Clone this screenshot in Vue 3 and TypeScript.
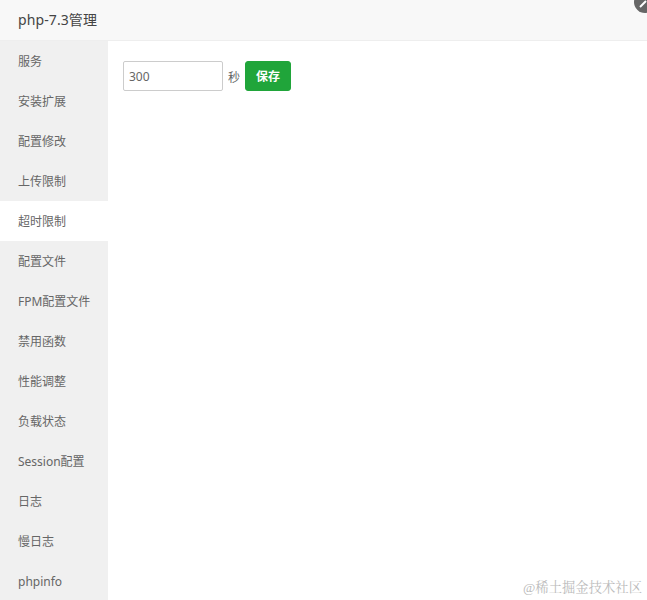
<script setup lang="ts">
const items: string[] = ['服务','安装扩展','配置修改','上传限制','超时限制','配置文件','FPM配置文件','禁用函数','性能调整','负载状态','Session配置','日志','慢日志','phpinfo']
const activeIndex = 4
</script>

<template>
  <div class="layer">
    <header class="title">php-7.3管理</header>
    <button class="close" aria-label="close">
      <svg width="16" height="16" viewBox="0 0 16 16"><path d="M3 13L9 7" stroke="#fff" stroke-width="2" fill="none"/></svg>
    </button>
    <div class="body">
      <nav class="side">
        <div v-for="(it, i) in items" :key="it" class="item" :class="{ on: i === activeIndex }">{{ it }}</div>
      </nav>
      <main class="main">
        <div class="form">
          <input class="field" value="300" />
          <span class="unit">秒</span>
          <button class="save">保存</button>
        </div>
      </main>
    </div>
    <div class="mark">@稀土掘金技术社区</div>
  </div>
</template>

<style>
html, body { margin: 0; background: #fff; overflow: hidden; }
</style>

<style scoped>
.layer {
  position: relative;
  width: 647px;
  height: 600px;
  overflow: hidden;
  background: #fff;
  font-family: "Noto Sans", "Noto Sans CJK SC", sans-serif;
  color: #555;
}
.title {
  box-sizing: border-box;
  height: 41px;
  padding-left: 18px;
  line-height: 40px;
  font-size: 14px;
  letter-spacing: 0.1px;
  color: #444;
  background: #f8f8f8;
  border-bottom: 1px solid #eee;
}
.close {
  position: absolute;
  top: -9px;
  right: -9px;
  width: 22px;
  height: 22px;
  padding: 0;
  border: 0;
  border-radius: 50%;
  background: #666;
  display: flex;
  align-items: center;
  justify-content: center;
}
.body { display: flex; height: 559px; }
.side { width: 108px; flex: none; background: #f0f0f0; }
.item {
  height: 40px;
  line-height: 42px;
  padding-left: 18px;
  font-size: 12px;
  color: #666;
  white-space: nowrap;
}
.item.on { background: #fff; }
.main { flex: 1; padding: 20px 15px; }
.form { display: flex; align-items: center; }
.field {
  box-sizing: border-box;
  width: 100px;
  height: 30px;
  padding: 0 5px;
  border: 1px solid #ccc;
  border-radius: 2px;
  font: inherit;
  font-size: 12px;
  color: #666;
  outline: none;
}
.unit { margin-left: 5px; padding-top: 2px; font-size: 12px; color: #666; }
.save {
  box-sizing: border-box;
  width: 46px;
  height: 30px;
  margin-left: 5px;
  padding: 0;
  border: 1px solid #20a53a;
  border-radius: 3px;
  background: #20a53a;
  color: #fff;
  font: inherit;
  font-size: 12px;
  font-weight: 700;
}
.mark {
  position: absolute;
  right: 5px;
  bottom: 2px;
  font-family: "Liberation Serif", "Noto Serif CJK SC", serif;
  font-size: 13.33px;
  line-height: 20px;
  color: #bbb;
}
</style>
